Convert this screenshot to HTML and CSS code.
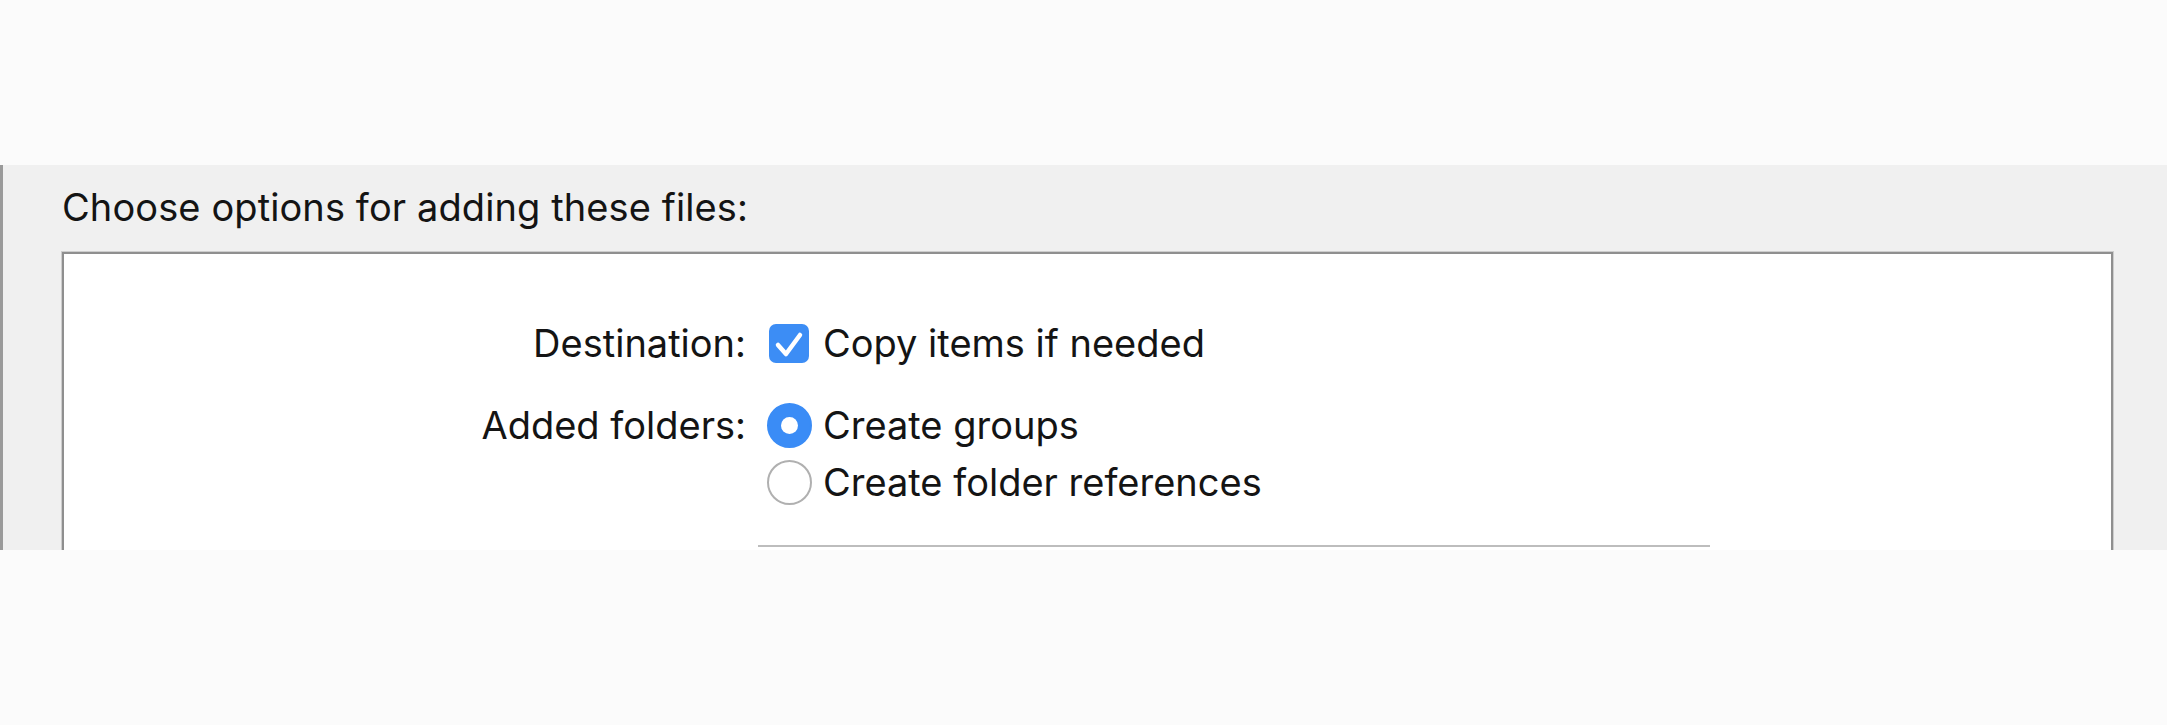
FILE: index.html
```html
<!DOCTYPE html>
<html lang="en">
<head>
<meta charset="utf-8">
<title>Choose options for adding these files</title>
<link rel="stylesheet" href="styles.css">
</head>
<body>
  <div class="top-space"></div>
  <section class="sheet">
    <h1 class="sheet-title">Choose options for adding these files:</h1>
    <div class="options-box">
      <div class="options-grid">
        <div class="label">Destination:</div>
        <div class="control-row first">
          <span class="checkbox checked">
            <svg viewBox="0 0 40 40" width="40" height="40" aria-hidden="true">
              <path d="M9 21 L17 30 L31 11" fill="none" stroke="#ffffff" stroke-width="4.5" stroke-linecap="round" stroke-linejoin="round"/>
            </svg>
          </span>
          <span class="control-text">Copy items if needed</span>
        </div>

        <div class="label second">Added folders:</div>
        <div class="control-group second">
          <div class="control-row">
            <span class="radio selected"><span class="radio-dot"></span></span>
            <span class="control-text">Create groups</span>
          </div>
          <div class="control-row">
            <span class="radio"></span>
            <span class="control-text">Create folder references</span>
          </div>
        </div>
      </div>
      <div class="separator"></div>
    </div>
  </section>
  <div class="bottom-space"></div>
</body>
</html>
```

FILE: styles.css
```css
html, body {
  margin: 0;
  padding: 0;
  background: #fbfbfb;
}

body {
  font-family: "Inter", "Liberation Sans", Arial, sans-serif;
  color: #141414;
  overflow: hidden;
}

.top-space {
  height: 165px;
}

.bottom-space {
  height: 175px;
}

.sheet {
  height: 385px;
  box-sizing: border-box;
  background: #f0f0f0;
  border-left: 3px solid #9a9a9a;
  padding: 14px 54px 0 59px;
  overflow: hidden;
}

.sheet-title {
  margin: 0;
  font-size: 38px;
  font-weight: 400;
  line-height: 57px;
  letter-spacing: 0.1px;
  white-space: nowrap;
}

.options-box {
  margin-top: 16px;
  height: 400px;
  background: #ffffff;
  border: 2px solid #8f8f8f;
  box-shadow: 0 0 0 1px #cdcdcd;
  padding-top: 61px;
}

.options-grid {
  display: grid;
  grid-template-columns: 682px 1fr;
  column-gap: 21px;
  font-size: 38px;
  line-height: 57px;
  letter-spacing: 0;
}

.label {
  text-align: right;
  white-space: nowrap;
}

.label.second,
.control-group.second {
  margin-top: 25px;
}

.control-row {
  display: flex;
  align-items: center;
  height: 57px;
  white-space: nowrap;
}

.control-text {
  margin-left: 11px;
}

.control-row.first .control-text {
  margin-left: 14px;
}

.checkbox {
  width: 40px;
  height: 39px;
  margin-left: 2px;
  border-radius: 7px;
  background: #3c8df5;
  display: flex;
  align-items: center;
  justify-content: center;
  flex: none;
}

.checkbox svg {
  display: block;
}

.radio {
  width: 41px;
  height: 41px;
  border-radius: 50%;
  border: 2px solid #b0b0b0;
  background: #ffffff;
  display: flex;
  align-items: center;
  justify-content: center;
  flex: none;
}

.radio.selected {
  border-color: #3a8cf6;
  background: #3a8cf6;
}

.radio-dot {
  width: 17px;
  height: 17px;
  border-radius: 50%;
  background: #ffffff;
}

.separator {
  margin: 34px 0 0 694px;
  width: 952px;
  height: 2px;
  background: #bdbdbd;
}
```
